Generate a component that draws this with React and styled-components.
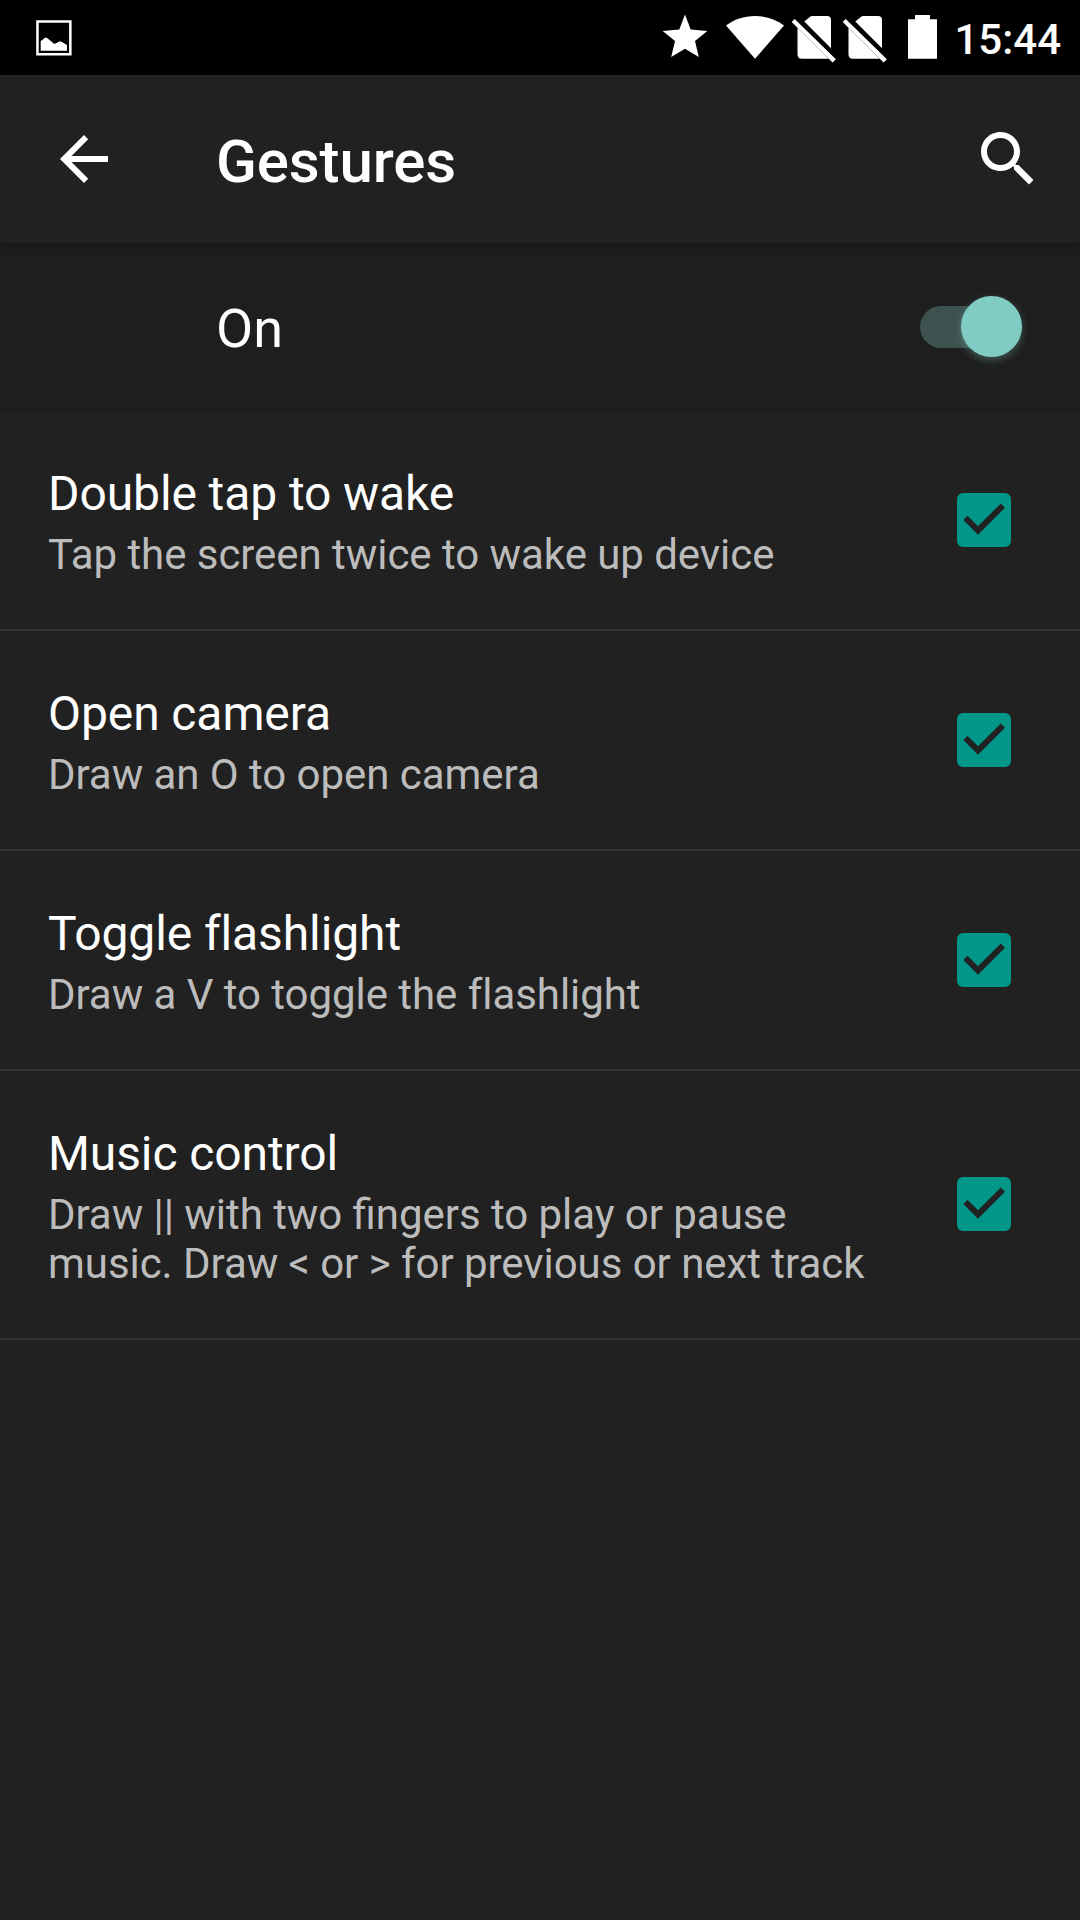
import { useState } from "react";
import styled, { createGlobalStyle } from "styled-components";

const GlobalStyle = createGlobalStyle`
  *, *::before, *::after {
    box-sizing: border-box;
  }

  body {
    margin: 0;
    background-color: #212121;
    color: #fff;
    font-family: Roboto, "Noto Sans", sans-serif;
  }
`;

const Screen = styled.div`
  display: flex;
  flex-direction: column;
  width: 1080px;
  height: 1920px;
  overflow: hidden;
  background-color: #212121;

  svg {
    display: block;
    flex: none;
    fill: currentColor;
  }
`;

const StatusBarContainer = styled.div`
  display: flex;
  flex: none;
  justify-content: space-between;
  height: 75px;
  padding: 0 19px 0 36px;
  background-color: #000;
`;

const NotificationIcons = styled.div`
  padding-top: 20px;
`;

const StatusIcons = styled.div`
  display: flex;
`;

const Clock = styled.time`
  padding: 15px 0 0 15px;
  font-size: 42px;
  font-weight: 500;
  line-height: 49px;
`;

const Toolbar = styled.header`
  display: flex;
  flex: none;
  align-items: center;
  height: 168px;
  padding: 0 36px 0 48px;
  box-shadow: 0 3px 9px rgba(0, 0, 0, 0.3);
  z-index: 1;
`;

const IconButton = styled.button`
  display: flex;
  padding: 0;
  border: 0;
  background: none;
  color: inherit;
`;

const Title = styled.h1`
  flex: 1;
  margin: 0;
  padding: 5px 0 0 96px;
  font-size: 60px;
  font-weight: 500;
  line-height: 70px;
  letter-spacing: -0.1px;
`;

const SwitchBar = styled.section`
  display: flex;
  flex: none;
  align-items: center;
  justify-content: space-between;
  height: 168px;
  padding: 0 58px 0 216px;
  background-color: #1e1e1e;
  font-size: 54px;
  line-height: 63px;

  span {
    padding-top: 2px;
  }
`;

const Track = styled.button`
  display: flex;
  justify-content: ${({ $on }) => ($on ? "flex-end" : "flex-start")};
  align-items: center;
  width: 102px;
  height: 42px;
  padding: 0;
  border: 0;
  border-radius: 21px;
  background-color: ${({ $on }) => ($on ? "#3d524f" : "#4d4d4d")};
`;

const Thumb = styled.i`
  width: 61px;
  height: 61px;
  flex: none;
  margin-top: -1px;
  border-radius: 50%;
  background-color: ${({ $on }) => ($on ? "#80cbc4" : "#bdbdbd")};
  box-shadow: 0 3px 8px rgba(128, 203, 196, 0.35);
`;

const List = styled.ul`
  margin: 0;
  padding: 0;
  list-style: none;
`;

const Row = styled.li`
  display: flex;
  align-items: center;
  justify-content: space-between;
  padding: 54px 69px 50px 48px;
  border-bottom: 2px solid #323232;
`;

const RowText = styled.div`
  width: 830px;
`;

const RowTitle = styled.h2`
  margin: 0 0 8px;
  padding-top: 1px;
  font-size: 48px;
  font-weight: 400;
  line-height: 56px;
  letter-spacing: -0.1px;
`;

const Summary = styled.p`
  margin: 0;
  color: #bcbcbc;
  font-size: 42px;
  line-height: 49px;
  letter-spacing: -0.05px;
  font-feature-settings: "liga" ${({ $ligatures }) => ($ligatures ? 1 : 0)};
`;

const Checkbox = styled.button`
  display: flex;
  width: 54px;
  height: 54px;
  margin-top: -5px;
  padding: 0;
  border: 0;
  border-radius: 6px;
  background-color: ${({ $checked }) => ($checked ? "#009688" : "#757575")};
  color: #212121;
`;

const PictureIcon = () => (
  <svg width="36" height="36" viewBox="0 0 36 36">
    <path d="M.2.2h35.4v35.4H.2zM2.7 2.7v30.4h30.4V2.7z" fillRule="evenodd" />
    <path d="M4.7 30.8V21.3L9.3 17.6l2.2.7L18 23.7l1.5-.2L24 21.2l2 .7 5 3.2v5.7z" />
  </svg>
);

const StarIcon = () => (
  <svg width="62" height="75" viewBox="656 0 62 75">
    <path d="M685 14.5L690.7 29.5L707.3 31L695 41L698.8 57L685 48.8L671.2 57L675 41L662.7 31L679.3 29.5Z" />
  </svg>
);

const WifiIcon = () => (
  <svg width="72" height="75" viewBox="718 0 72 75">
    <path d="M755 58.7L726 25.6C734 19.4 744 16 755 16s21 3.4 29 9.6z" />
  </svg>
);

const NoSimIcon = () => (
  <svg width="51" height="75" viewBox="790 0 51 75">
    <path d="M804.3 21.5l5.2-4.2q1.3-1.3 3-1.3H827q4 0 4 4v28.3z" />
    <path d="M797.5 27.8L828.8 58.7H802q-4.5 0-4.5-4.5z" />
    <path d="M791.7 22.1l3-3.1 41.2 40.2-3.3 3.2z" />
  </svg>
);

const BatteryIcon = () => (
  <svg width="47" height="75" viewBox="892 0 47 75">
    <path d="M908 19.2h7V15h15v4.2h7v39.5h-29z" />
  </svg>
);

const BackIcon = () => (
  <svg width="72" height="72" viewBox="0 0 24 24">
    <path d="M20 11H7.83l5.59-5.59L12 4l-8 8 8 8 1.41-1.41L7.83 13H20v-2z" />
  </svg>
);

const SearchIcon = () => (
  <svg width="72" height="72" viewBox="0 0 24 24">
    <path d="M15.5 14h-.79l-.28-.27C15.41 12.59 16 11.11 16 9.5 16 5.91 13.09 3 9.5 3S3 5.91 3 9.5 5.91 16 9.5 16c1.61 0 3.09-.59 4.23-1.57l.27.28v.79l5 4.99L20.49 19l-4.99-5zm-6 0C7.01 14 5 11.99 5 9.5S7.01 5 9.5 5 14 7.01 14 9.5 11.99 14 9.5 14z" />
  </svg>
);

const CheckIcon = () => (
  <svg width="54" height="54" viewBox="0 0 54 54">
    <path d="M6.3 27l4.2-4.2L21 33.3l22.8-22.8 4.2 4.2L21 41.7z" />
  </svg>
);

const gestures = [
  {
    id: "wake",
    title: "Double tap to wake",
    summary: "Tap the screen twice to wake up device",
  },
  {
    id: "camera",
    title: "Open camera",
    summary: "Draw an O to open camera",
  },
  {
    id: "flashlight",
    title: "Toggle flashlight",
    summary: "Draw a V to toggle the flashlight",
  },
  {
    id: "music",
    title: "Music control",
    summary:
      "Draw || with two fingers to play or pause music. Draw < or > for previous or next track",
    ligatures: true,
  },
];

const StatusBar = () => (
  <StatusBarContainer>
    <NotificationIcons>
      <PictureIcon />
    </NotificationIcons>
    <StatusIcons>
      <StarIcon />
      <WifiIcon />
      <NoSimIcon />
      <NoSimIcon />
      <BatteryIcon />
      <Clock>15:44</Clock>
    </StatusIcons>
  </StatusBarContainer>
);

const GestureRow = ({ gesture }) => {
  const [checked, setChecked] = useState(true);

  return (
    <Row>
      <RowText>
        <RowTitle>{gesture.title}</RowTitle>
        <Summary $ligatures={gesture.ligatures}>{gesture.summary}</Summary>
      </RowText>
      <Checkbox
        role="checkbox"
        aria-checked={checked}
        aria-label={gesture.title}
        $checked={checked}
        onClick={() => setChecked(!checked)}
      >
        {checked && <CheckIcon />}
      </Checkbox>
    </Row>
  );
};

const App = () => {
  const [enabled, setEnabled] = useState(true);

  return (
    <>
      <GlobalStyle />
      <Screen>
        <StatusBar />
        <Toolbar>
          <IconButton aria-label="Back">
            <BackIcon />
          </IconButton>
          <Title>Gestures</Title>
          <IconButton aria-label="Search">
            <SearchIcon />
          </IconButton>
        </Toolbar>
        <SwitchBar>
          <span>{enabled ? "On" : "Off"}</span>
          <Track
            role="switch"
            aria-checked={enabled}
            aria-label="Gestures"
            $on={enabled}
            onClick={() => setEnabled(!enabled)}
          >
            <Thumb $on={enabled} />
          </Track>
        </SwitchBar>
        <List>
          {gestures.map((gesture) => (
            <GestureRow key={gesture.id} gesture={gesture} />
          ))}
        </List>
      </Screen>
    </>
  );
};

export default App;
